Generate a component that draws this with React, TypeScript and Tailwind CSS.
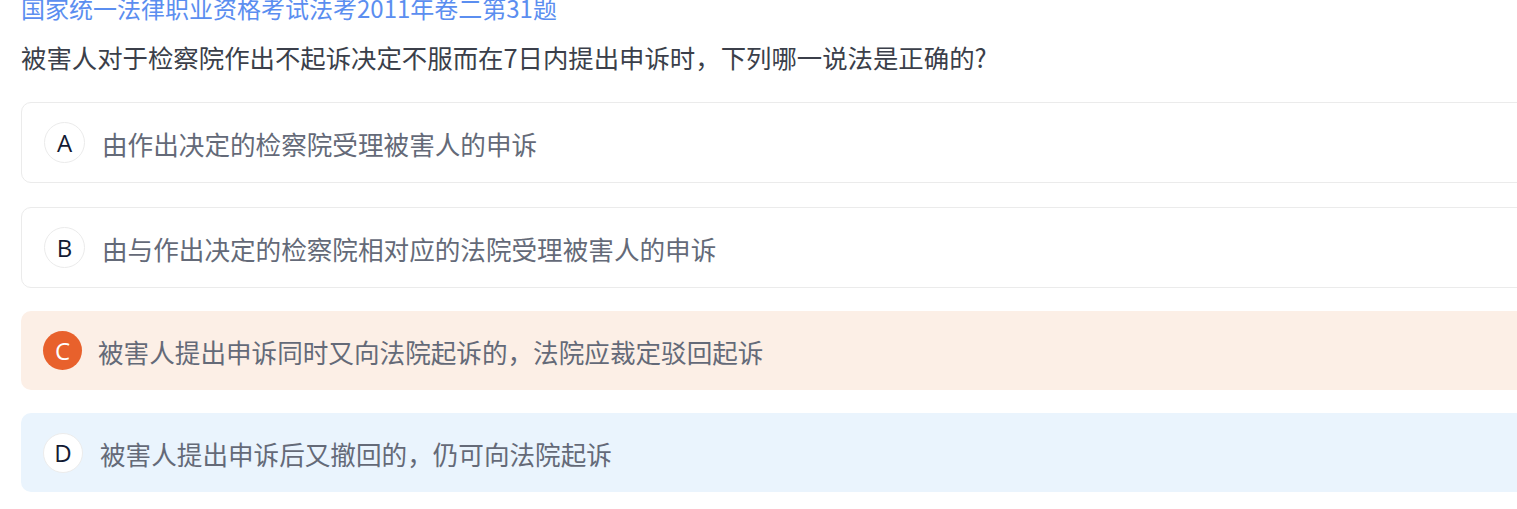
import React from "react";

const cjk = { fontFamily: '"Noto Sans CJK SC", "Noto Sans", sans-serif' };
const latin = { fontFamily: '"Open Sans", "Noto Sans", sans-serif' };

export default function App() {
  return (
    <div className="w-[1517px] h-[509px] overflow-hidden bg-white" style={cjk}>
      <div className="pl-[21px] w-[1560px]">
        <div className="mt-[-9px] h-[34px] leading-[34px] text-[24px] text-[#5b8ef0] whitespace-nowrap">
          国家统一法律职业资格考试法考2011年卷二第31题
        </div>
        <div className="mt-[14px] h-[36px] leading-[36px] text-[25.4px] text-[#3b3f4a] whitespace-nowrap">
          被害人对于检察院作出不起诉决定不服而在7日内提出申诉时，下列哪一说法是正确的?
        </div>

        {/* A */}
        <div className="mt-[27px] h-[81px] flex items-center rounded-[10px] border border-[#ebebeb] bg-white pl-[22px]">
          <div
            className="w-[41px] h-[41px] shrink-0 rounded-full border border-[#ebebeb] bg-white flex items-center justify-center text-[24px] text-[#121a33]"
            style={latin}
          >
            A
          </div>
          <div className="ml-[17px] pt-[3px] text-[25.6px] text-[#646a78] whitespace-nowrap">
            由作出决定的检察院受理被害人的申诉
          </div>
        </div>

        {/* B */}
        <div className="mt-[24px] h-[81px] flex items-center rounded-[10px] border border-[#ebebeb] bg-white pl-[22px]">
          <div
            className="w-[41px] h-[41px] shrink-0 rounded-full border border-[#ebebeb] bg-white flex items-center justify-center text-[24px] text-[#121a33]"
            style={latin}
          >
            B
          </div>
          <div className="ml-[17px] pt-[3px] text-[25.6px] text-[#646a78] whitespace-nowrap">
            由与作出决定的检察院相对应的法院受理被害人的申诉
          </div>
        </div>

        {/* C */}
        <div className="mt-[23px] h-[79px] flex items-center rounded-[10px] bg-[#fcefe6] pl-[22px]">
          <div
            className="w-[39px] h-[39px] shrink-0 rounded-full bg-[#e8612c] flex items-center justify-center text-[24px] text-white"
            style={latin}
          >
            C
          </div>
          <div className="ml-[16px] pt-[3px] text-[25.6px] text-[#646a78] whitespace-nowrap">
            被害人提出申诉同时又向法院起诉的，法院应裁定驳回起诉
          </div>
        </div>

        {/* D */}
        <div className="mt-[23px] h-[79px] flex items-center rounded-[10px] bg-[#eaf4fd] pl-[22px]">
          <div
            className="w-[40px] h-[40px] shrink-0 rounded-full border border-[#ececec] bg-white flex items-center justify-center text-[24px] text-[#121a33]"
            style={latin}
          >
            D
          </div>
          <div className="ml-[17px] pt-[3px] text-[25.6px] text-[#646a78] whitespace-nowrap">
            被害人提出申诉后又撤回的，仍可向法院起诉
          </div>
        </div>
      </div>
    </div>
  );
}
